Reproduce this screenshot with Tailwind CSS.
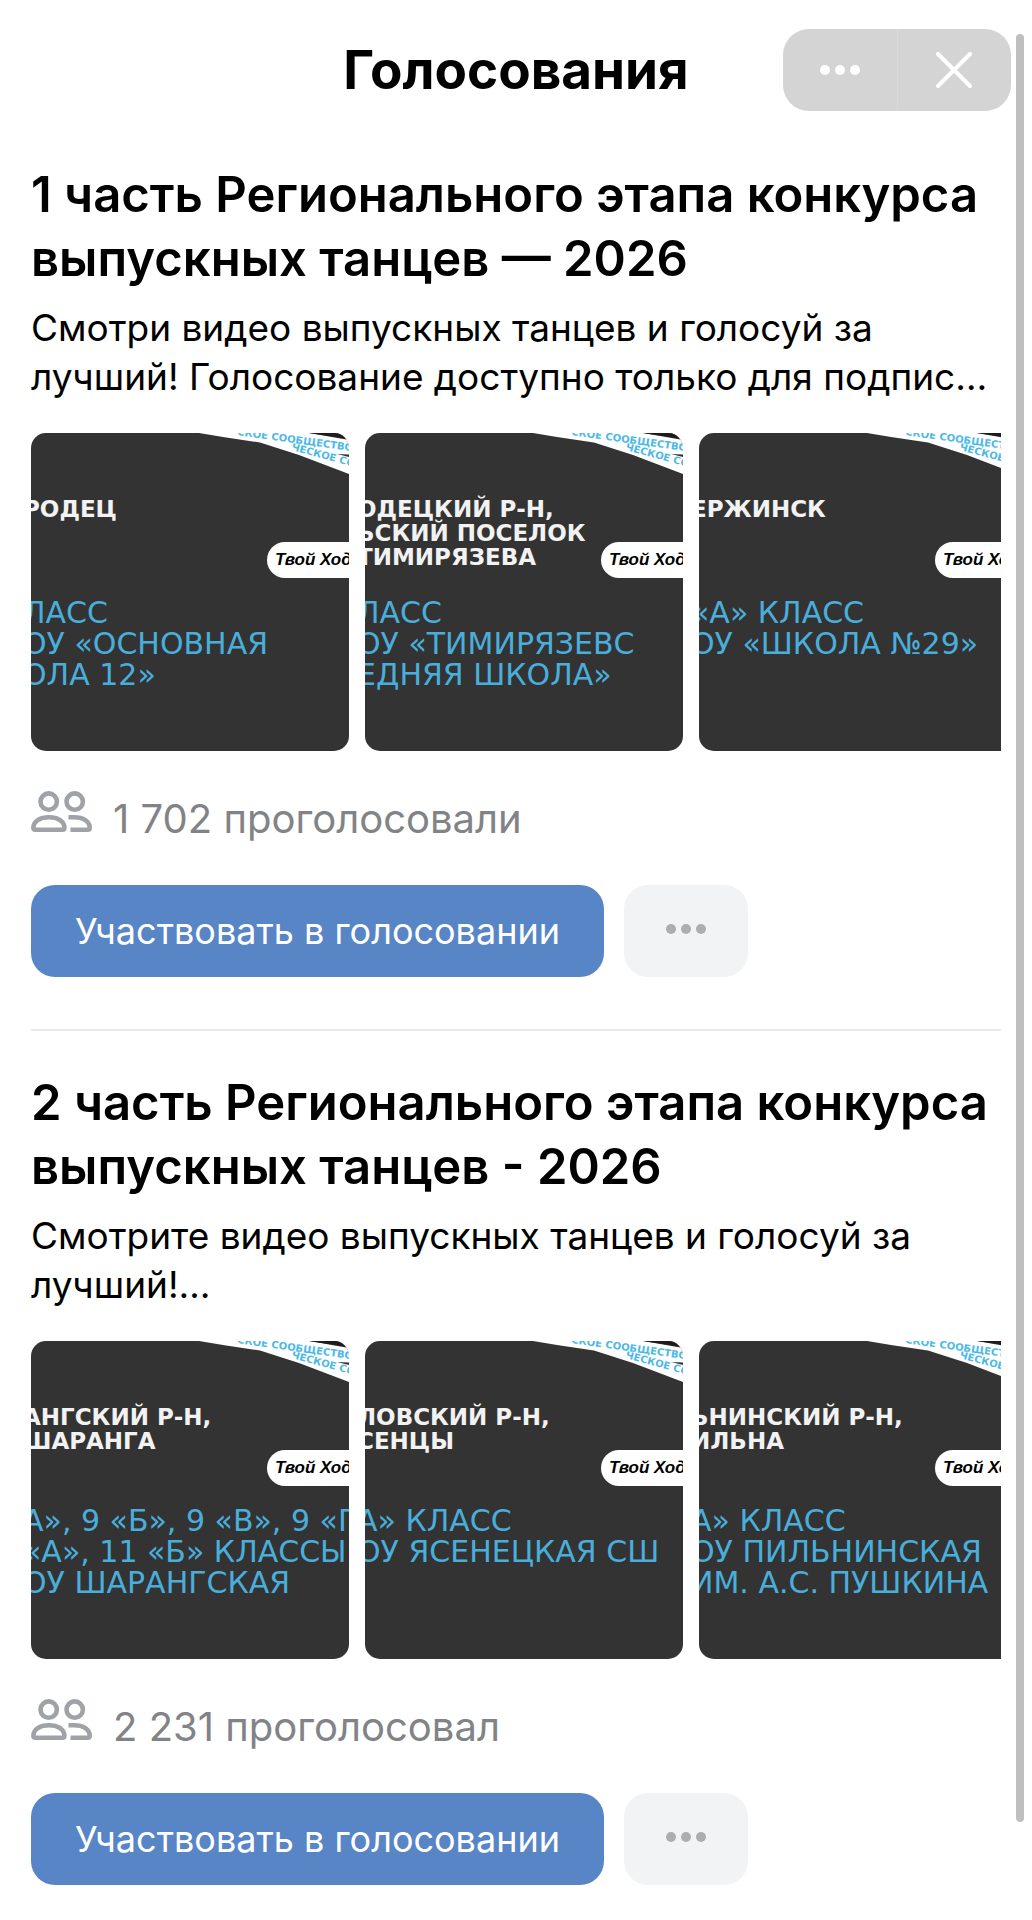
<!DOCTYPE html>
<html lang="ru">

<head>
    <meta charset="UTF-8">
    <meta name="viewport" content="width=device-width, initial-scale=1.0">
    <script src="https://cdn.jsdelivr.net/npm/@tailwindcss/browser@4"></script>
    <title>Голосования</title>
</head>

<body class="relative bg-white text-black font-['Inter','Noto_Sans',sans-serif]">
    <!-- общие иконки -->
    <svg class="hidden">
        <symbol id="icon-dots" viewBox="0 0 42 12">
            <circle cx="6" cy="6" r="5" fill="currentColor" />
            <circle cx="21" cy="6" r="5" fill="currentColor" />
            <circle cx="36" cy="6" r="5" fill="currentColor" />
        </symbol>
        <symbol id="icon-users" viewBox="0 0 62 42">
            <g fill="none" stroke="currentColor" stroke-width="4.6" stroke-linecap="butt" stroke-linejoin="round">
                <circle cx="17.7" cy="10.6" r="8.2" />
                <circle cx="43.7" cy="10.6" r="8.2" />
                <path d="M4.4 38.7h27q2 0 2-2C33.4 30.5 27 26.3 17.9 26.3S2.4 30.5 2.4 36.7q0 2 2 2z" />
                <path d="M37.5 26.3h5.5c9.5 0 15.7 4.2 15.7 10.4q0 2-2 2H39.5" />
            </g>
        </symbol>
        <symbol id="ribbons" viewBox="0 0 150 42">
            <path d="M0 0H110L150 7V41L100 22L61 9.5L24 4Z" fill="#fff" />
            <path d="M110 0H150V6Z" fill="#211a1c" />
            <path d="M138 21L150 24V21.5Z" fill="#333333" />
            <text x="38" y="2" transform="rotate(8 38 2)" font-family="DejaVu Sans" font-weight="700" font-size="10" fill="#4bb9e8">СКОЕ СООБЩЕСТВО</text>
            <text x="92" y="17" transform="rotate(15 92 17)" font-family="DejaVu Sans" font-weight="700" font-size="10" fill="#4bb9e8">ЧЕСКОЕ СО</text>
        </symbol>
    </svg>

    <header class="grid grid-cols-[1fr_auto_1fr] items-center px-[21px] pt-[29px]">
        <h1 class="col-start-2 text-[53px] leading-[64px] font-bold">Голосования</h1>
        <div class="flex h-[82px] w-[228px] justify-self-end rounded-[26px] bg-[#d4d4d4] text-white">
            <button class="flex flex-1 items-center justify-center border-r border-[#d9d9d9]" aria-label="Меню">
                <svg class="h-3 w-[42px]"><use href="#icon-dots" /></svg>
            </button>
            <button class="flex flex-1 items-center justify-center" aria-label="Закрыть">
                <svg class="h-9 w-9" viewBox="0 0 36 36" fill="none" stroke="currentColor" stroke-width="4" stroke-linecap="round">
                    <path d="M2 2l32 32M34 2L2 34" />
                </svg>
            </button>
        </div>
    </header>

    <main id="polls" class="px-[31px] pt-3 pb-8">
        <!-- сюда вставляются голосования -->
    </main>

    <div class="absolute top-[34px] right-2 bottom-[95px] w-2 rounded-full bg-[#bfbfbf]"></div>

    <script>
        const polls = [
            {
                title: '1 часть Регионального этапа конкурса выпускных танцев — 2026',
                text: 'Смотри видео выпускных танцев и голосуй за лучший! Голосование доступно только для подпис…',
                votes: '1 702 проголосовали',
                tiles: [
                    { place: ['РОДЕЦ'], school: ['ЛАСС', 'ОУ «ОСНОВНАЯ', 'ОЛА 12»'] },
                    { place: ['ОДЕЦКИЙ Р-Н,', 'ЬСКИЙ ПОСЕЛОК', 'ТИМИРЯЗЕВА'], school: ['ЛАСС', 'ОУ «ТИМИРЯЗЕВС', 'ЕДНЯЯ ШКОЛА»'] },
                    { place: ['ЕРЖИНСК'], school: ['«А» КЛАСС', 'ОУ «ШКОЛА №29»'] }
                ]
            },
            {
                title: '2 часть Регионального этапа конкурса выпускных танцев - 2026',
                text: 'Смотрите видео выпускных танцев и голосуй за лучший!…',
                votes: '2 231 проголосовал',
                tiles: [
                    { place: ['АНГСКИЙ Р-Н,', 'ШАРАНГА'], school: ['А», 9 «Б», 9 «В», 9 «Г', '«А», 11 «Б» КЛАССЫ', 'ОУ ШАРАНГСКАЯ'] },
                    { place: ['ЛОВСКИЙ Р-Н,', 'СЕНЦЫ'], school: ['А» КЛАСС', 'ОУ ЯСЕНЕЦКАЯ СШ'] },
                    { place: ['ЬНИНСКИЙ Р-Н,', 'ИЛЬНА'], school: ['А» КЛАСС', 'ОУ ПИЛЬНИНСКАЯ', 'ИМ. А.С. ПУШКИНА'] }
                ]
            }
        ];

        function tileHtml(tile) {
            return `
                <li class="relative h-[318px] w-[318px] shrink-0 overflow-hidden rounded-[15px] bg-[#333333] font-['DejaVu_Sans',sans-serif] whitespace-nowrap">
                    <svg class="absolute top-0 right-0 h-[42px] w-[150px]"><use href="#ribbons" /></svg>
                    <div class="-ml-2 flex h-[160px] flex-col pt-16 text-[23px] leading-6 font-bold text-[#f2f2f2]">
                        ${tile.place.map(line => `<p>${line}</p>`).join('')}
                    </div>
                    <div class="-ml-2 pt-1 text-[30px] leading-[31px] text-[#4aaedb]">
                        ${tile.school.map(line => `<p>${line}</p>`).join('')}
                    </div>
                    <span class="absolute top-[109px] right-0 h-9 w-[82px] rounded-l-full bg-white pl-2 font-['Liberation_Sans',sans-serif] text-[17px] leading-9 font-bold text-black italic">Твой Ход</span>
                </li>`;
        }

        function pollHtml(poll) {
            return `
                <section class="border-b-2 border-[#e9eaeb] pt-10 pb-[52px] last:border-b-0 last:pb-0">
                    <h2 class="text-[49px] leading-[64px] font-semibold">${poll.title}</h2>
                    <p class="mt-3 text-[37px] leading-[49px]">${poll.text}</p>
                    <ul class="mt-8 flex gap-4 overflow-hidden">${poll.tiles.map(tileHtml).join('')}</ul>
                    <div class="mt-10 flex items-start gap-5 text-[40px] leading-[56px] text-[#818386]">
                        <svg class="h-[42px] w-[62px] shrink-0 text-[#9fa2a6]"><use href="#icon-users" /></svg>
                        <p>${poll.votes}</p>
                    </div>
                    <div class="mt-[38px] flex gap-5">
                        <button class="h-[92px] rounded-[24px] bg-[#5885c6] px-11 text-[36px] text-white">Участвовать в голосовании</button>
                        <button class="flex h-[92px] w-[124px] items-center justify-center rounded-[24px] bg-[#f2f3f5] pb-1 text-[#adadaf]" aria-label="Ещё">
                            <svg class="h-3 w-[42px]"><use href="#icon-dots" /></svg>
                        </button>
                    </div>
                </section>`;
        }

        document.getElementById('polls').innerHTML = polls.map(pollHtml).join('');
    </script>
</body>

</html>
